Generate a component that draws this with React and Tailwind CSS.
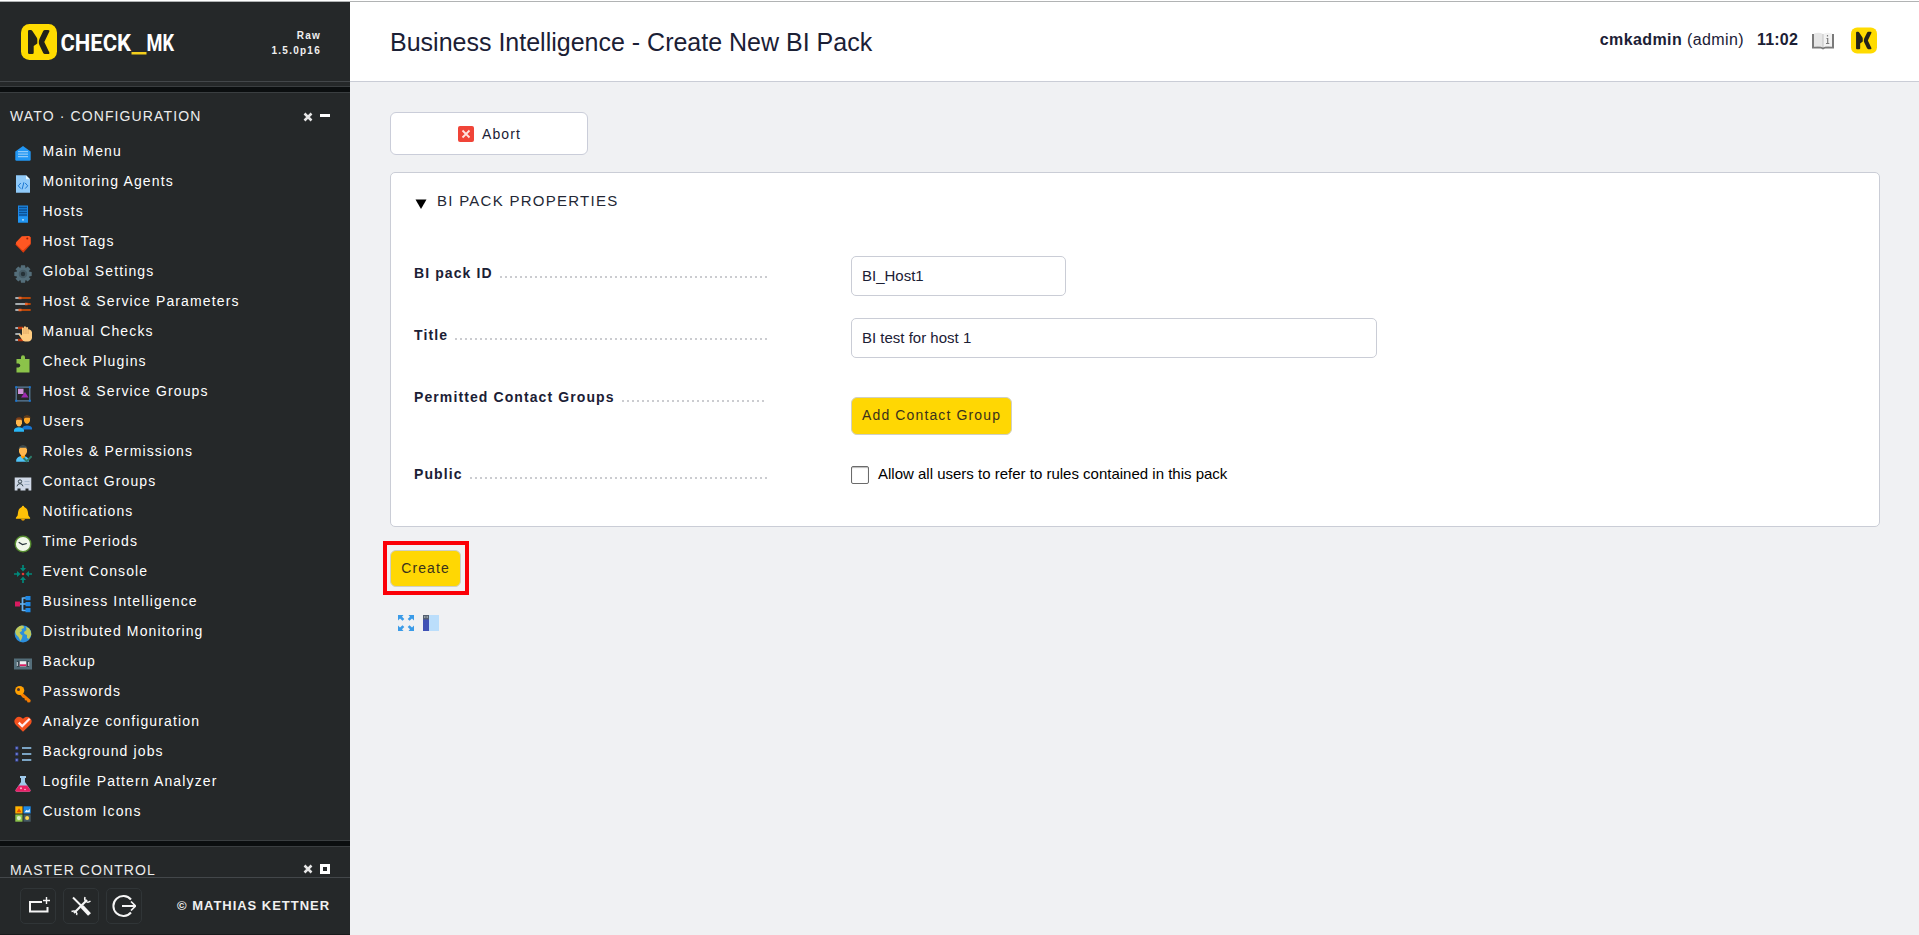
const icons = {
  main: (
    <>
      <path d="M1.3 6.5 9 1l7.700 5.500V14.500a1.200 1.200 0 0 1-1.200 1.200H2.500a1.200 1.200 0 0 1-1.200-1.200Z" fill="#2196f3" />
      <path d="M4 6.700h10M4 9.200h10M4 11.700h10" stroke="#90caf9" strokeWidth="1.200" />
    </>
  ),
  agents: (
    <>
      <path d="M2 .3h10l4 4v13.400H2Z" fill="#90caf9" />
      <path d="M12 .3l4 4h-4Z" fill="#e1f5fe" />
      <path d="M6.800 8 4.300 10.800 6.800 13.600M11.200 8l2.500 2.800-2.500 2.800M9.900 7.300 8.100 14.300" stroke="#1976d2" strokeWidth="1" fill="none" />
    </>
  ),
  hosts: (
    <>
      <path d="M4 .5h10v17H4Z" fill="#1e88e5" />
      <path d="M5 2.500h8M5 5h8M5 7.500h8M5 10h8" stroke="#0b4f92" strokeWidth="1.300" />
      <path d="M4 11.700h10v5.800H4Z" fill="#2196f3" />
      <circle cx="9" cy="14.800" r=".9" fill="#cfe8fb" />
    </>
  ),
  tags: (
    <>
      <path d="M1.300 9.500 9 3.500l7.700-1.500v7.500L9.300 17.700Z" fill="#d83a0e" />
      <path d="M2.500 6.800 7.800 1.300 14.800.9q1.500 0 1.700 1.700l.1 5.900L9.500 15Q8.500 15.500 7.800 14.700L2.100 9Q1.300 8 2.500 6.800Z" fill="#ff5722" />
      <circle cx="13.300" cy="3.600" r="1" fill="#8e240c" />
    </>
  ),
  gear: (
    <>
      <g fill="#546e7a">
        <circle cx="9" cy="9" r="6.700" />
        <path d="M7 .3h4l.5 3h-5ZM7 17.700h4l.5-3h-5ZM.3 11V7l3-.5v5ZM17.700 11V7l-3-.5v5Z" />
        <path d="M1.500 4.300 4.300 1.500l2.200 1.800-3 3ZM16.500 4.300 13.700 1.500l-2.200 1.800 3 3ZM1.500 13.700l2.800 2.800 2.200-1.800-3-3ZM16.500 13.700l-2.800 2.800-2.200-1.800 3-3Z" />
      </g>
      <circle cx="9" cy="9" r="4.300" fill="#455a64" />
      <circle cx="9" cy="9" r="2.200" fill="#263238" />
    </>
  ),
  params: (
    <>
      <path d="M1.300 3h4M1.300 9h10M1.300 15h4" stroke="#cfd8dc" strokeWidth="1.700" />
      <path d="M5.500 3h11.200M11.500 9h5.200M5.500 15h11.200" stroke="#e65100" strokeWidth="1.700" />
      <path d="M4.500 1.700h3v2.600h-3ZM11 7.700h2.600v2.600H11ZM4.500 13.700h3v2.600h-3Z" fill="#e8622a" />
    </>
  ),
  manual: (
    <>
      <path d="M1.300 3h5M1.300 9h5M1.300 15h4" stroke="#cfd8dc" strokeWidth="1.500" />
      <path d="M4 3h5M4 15h5" stroke="#bf360c" strokeWidth="2.600" />
      <path d="M4.500 9.500q1.200-1.200 2.800.3L8 10.500V3q.9-1 1.900 0V1.800q1-1 2.100 0V2.500q1.100-.9 2.100 0v2q1-.8 2 .2q2 1.300 2 3.300v4.500q-.6 3.900-4 4H11q-2-.2-3-2Z" fill="#ffcc80" />
      <path d="M9.900 3v6M12 2.500V9M14.100 4v5" stroke="#c98f4e" strokeWidth=".6" />
    </>
  ),
  plugins: (
    <path d="M2.500 4H7V2.200Q7 .2 9 .2t2 2V4h4.500v13.400H2.500V12.500H4.500Q6.300 12 6.300 10.500T4.500 8.500H2.500Z" fill="#8bc34a" />
  ),
  groups: (
    <>
      <path d="M2.200 2.200h13.600v13.600H2.200Z" stroke="#5b7f9e" strokeWidth="1.200" fill="none" />
      <path d="M4 3.700h5.500v5.300H4Z" fill="#ce93d8" />
      <path d="M7 12.500 11 7l3.500 5.500Z" fill="#9c27b0" />
      <path d="M1.200 1.200h2v2h-2ZM14.800 1.200h2v2h-2ZM1.200 14.800h2v2h-2ZM14.800 14.800h2v2h-2Z" fill="#1976d2" />
    </>
  ),
  users: (
    <>
      <path d="M8.500 14.500v-2.300q1-1.500 4.500-1.700 4.500.3 5 2.500v1.500Z" fill="#1976d2" />
      <path d="M10 3q0-2.300 3-2.300T16 3v3q-1 3-3 3t-3-3Z" fill="#ffa726" />
      <path d="M9.500 4q-.3-3.500 3.500-3.700T16.500 4l-1-1.200h-4Z" fill="#5d3a1a" />
      <path d="M0 16.700v-2q.8-2.200 4.800-2.400 4.200.2 5.200 2.400v2Z" fill="#29b6f6" />
      <path d="M2 5.500q.2-2.500 3-2.500t3 2.500v3Q7 11.500 5 11.500T2 8.500Z" fill="#ffb74d" />
      <path d="M1.700 6Q1.500 2.500 5 2.300T8.200 6l-1-1.300H3Z" fill="#7a3d18" />
    </>
  ),
  roles: (
    <>
      <path d="M2.200 16.700v-2Q3.300 11.300 8.500 11q5.200.3 6.300 3.700v2Z" fill="#4fc3f7" />
      <path d="M7 9h4v3l-2 2-2-2Z" fill="#ff9800" />
      <path d="M5 4Q5.500.7 9 .7T13 4v3q-1.500 4-4 4T5 7Z" fill="#ffb74d" />
      <path d="M4.700 4.700Q4.500.3 9 .2t4.300 4.500L12 2.800H6Z" fill="#37474f" />
      <path d="m9.500 13 3.200 3.200 5-5" stroke="#2e7d6b" strokeWidth="2" fill="none" />
    </>
  ),
  contact: (
    <>
      <path d="M.7 2.500h16.600v13H14.500v-2h-3v2h-5v-2h-3v2H.7Z" fill="#cfd8e6" />
      <circle cx="6" cy="6.500" r="1.700" fill="none" stroke="#37474f" />
      <path d="M3 11.300q.4-2.500 3-2.700 2.600.2 3 2.700" fill="none" stroke="#37474f" />
      <path d="M10.500 6.500h5M10.500 9.500h5" stroke="#a9b9cd" />
    </>
  ),
  bell: (
    <>
      <path d="M9 .8q1 0 1.200 1.200 3 1 3.600 4.500l.6 4 1.700 2.300v1H1.900v-1l1.700-2.300.6-4Q4.800 3 7.800 2 8 .8 9 .8Z" fill="#ffc107" />
      <path d="M7 14h4q-.4 1.700-2 1.700T7 14Z" fill="#e69a00" />
    </>
  ),
  clock: (
    <>
      <circle cx="9" cy="9" r="8.500" fill="#558b2f" />
      <circle cx="9" cy="9" r="7.100" fill="#f1f8e9" />
      <path d="m4.700 7.200 3.800 2.300 4.300-1" stroke="#263238" strokeWidth="1.200" fill="none" />
    </>
  ),
  event: (
    <>
      <g stroke="#00897b" strokeWidth="1.700">
        <path d="M9 0v3M9 15v3M0 9h3.500M14.500 9H18" />
      </g>
      <path d="M6 3h6L9 6.500ZM6 15h6L9 11.500ZM3 6v6L6.500 9ZM15 6v6L11.500 9Z" fill="#00897b" />
      <circle cx="9" cy="9" r="1.300" fill="#e53935" />
    </>
  ),
  bi: (
    <>
      <path d="M5 9h8M8.500 2.500V16M8.500 3h4M8.500 15.500h4" stroke="#64b5f6" strokeWidth="1.700" fill="none" />
      <path d="M1 6.500h5v5H1Z" fill="#d81b60" />
      <path d="M11.500 1h5v4.200h-5ZM11.500 7h5v4.200h-5ZM11.500 13h5v4.200h-5Z" fill="#1e88e5" />
    </>
  ),
  globe: (
    <>
      <circle cx="9" cy="9" r="8.400" fill="#2c8fdc" />
      <path d="M3 3Q6-.5 9.500.8L10 3 7.500 4 8 6 5.500 7.500 7 9.500l1.500 1L8 13l-1.500 3L4.500 12 2 9.500 1.200 7Q1.500 4.500 3 3ZM12 2l3 1.200Q17.500 6 17.200 10L15 14l-2-1V10l-2.500-1L10 7l2.500-2Z" fill="#c0ca5a" />
    </>
  ),
  backup: (
    <>
      <path d="M0 3.500h18v11H0Z" fill="#546e7a" />
      <path d="M3 5.700h12v6.300H3Z" fill="#37474f" />
      <path d="M5.700 6.200h6.600v5.300H5.700Z" fill="#eceff1" />
      <path d="M5.700 9.300h6.600v1.800H5.700Z" fill="#d81b60" />
      <path d="M3.300 7v4M14.700 7v4" stroke="#cfd8dc" />
    </>
  ),
  key: (
    <>
      <path d="m8 7.500 8.700 7.500-.4 2.200-2.600.2-1-2-1.800-.2-.4-2-1.700-.4L5.500 9Z" fill="#f57c00" />
      <circle cx="5.700" cy="5.500" r="4.600" fill="#ffa000" />
      <circle cx="4.500" cy="4.400" r="1.500" fill="#4e342e" />
    </>
  ),
  heart: (
    <>
      <path d="M9 16.700 2 10Q-.7 7 1 4.200 4.500-.2 9 3.700q4.500-3.900 8 .5 1.700 2.800-1 5.800Z" fill="#f4511e" />
      <path d="m4.700 7.600 3.500 3.500 7.500-7.300" stroke="#ffebee" strokeWidth="2.200" fill="none" />
    </>
  ),
  jobs: (
    <>
      <path d="M1.300 1.500h3v3h-3ZM1.300 7.500h3v3h-3ZM1.300 13.500h3v3h-3Z" fill="#3f51b5" />
      <path d="M2.300 2.500h1v1h-1ZM2.300 8.500h1v1h-1ZM2.300 14.500h1v1h-1Z" fill="#c5cae9" />
      <path d="M8 3h9.300M8 9h9.300M8 15h9.300" stroke="#7ba4c4" strokeWidth="2" />
    </>
  ),
  flask: (
    <>
      <path d="M6 1h6v2h-1v4l5.500 8q.4 1.700-1.500 1.700H3Q1.100 16.700 1.500 15L7 7V3H6Z" fill="#9fc9ea" />
      <path d="M4.800 10.500h8.400l3.300 4.800q.2 1.400-1.500 1.400H3q-1.700 0-1.500-1.400Z" fill="#e91e63" />
      <circle cx="7" cy="13.300" r="1" fill="#f8bbd0" />
      <circle cx="11" cy="14.500" r=".8" fill="#f8bbd0" />
    </>
  ),
  custom: (
    <>
      <path d="M1.300 1.300h7.200v7.200H1.300Z" fill="#ffb300" />
      <path d="M9.500 1.300h7.200v7.200H9.500Z" fill="#1e88e5" />
      <path d="M1.300 9.500h7.200v7.200H1.300Z" fill="#8bc34a" />
      <path d="M9.500 9.500h7.200v7.200H9.500Z" fill="#455a64" />
      <path d="m2.500 7.300 2.500-4 2.500 4Z" fill="#e65100" />
      <path d="m10.500 7.300 2-2.500 1.500 1 1.800-2v3.500Z" fill="#e3f2fd" />
      <circle cx="4.900" cy="13.100" r="2.100" fill="#dcedc8" />
      <circle cx="13.100" cy="13.100" r="2" fill="#ffd54f" />
    </>
  ),
};

const menu = [
  ["main", "Main Menu"],
  ["agents", "Monitoring Agents"],
  ["hosts", "Hosts"],
  ["tags", "Host Tags"],
  ["gear", "Global Settings"],
  ["params", "Host & Service Parameters"],
  ["manual", "Manual Checks"],
  ["plugins", "Check Plugins"],
  ["groups", "Host & Service Groups"],
  ["users", "Users"],
  ["roles", "Roles & Permissions"],
  ["contact", "Contact Groups"],
  ["bell", "Notifications"],
  ["clock", "Time Periods"],
  ["event", "Event Console"],
  ["bi", "Business Intelligence"],
  ["globe", "Distributed Monitoring"],
  ["backup", "Backup"],
  ["key", "Passwords"],
  ["heart", "Analyze configuration"],
  ["jobs", "Background jobs"],
  ["flask", "Logfile Pattern Analyzer"],
  ["custom", "Custom Icons"],
];

function Mark({ className }) {
  return (
    <svg viewBox="0 0 36 36" className={className}>
      <rect width="36" height="36" rx="8.500" fill="#ffdb00" />
      <path d="M7 7.300Q7 6 8.300 6h1.500q1 0 1.600.9l4.300 6.600q.6.900.6 1.900v4.100l-3.600 2.500v6.700q0 1.300-1.300 1.300H8.300Q7 30 7 28.700Z" fill="#23231a" />
      <path d="M24 6h3q2.200 0 1.100 2l-4.800 9.900 4.800 10.100q1.100 2-1.100 2h-3q-1.200 0-1.800-1.100l-3.800-8q-.6-1-.6-2.900t.6-3.100l3.800-7.800Q22.800 6 24 6Z" fill="#23231a" />
    </svg>
  );
}

function Divider() {
  return <div className="h-[7px] shrink-0 border-y border-[#3a3e40] bg-[#0b0e0f]" />;
}

function CloseIcon() {
  return (
    <svg viewBox="0 0 10 10" className="size-[10px]">
      <path d="M1.500 1.500l7 7M8.500 1.500l-7 7" stroke="#e6e6e6" strokeWidth="2.500" />
    </svg>
  );
}

function FooterButton({ children }) {
  return (
    <div className="flex size-[36px] items-center justify-center rounded-[5px] border border-[#303537]">
      <svg viewBox="0 0 24 24" className="size-[24px]" fill="none" stroke="#f5f5f5">
        {children}
      </svg>
    </div>
  );
}

function Row({ label, height, children }) {
  return (
    <div className={`flex items-start ${height}`}>
      <div className="flex h-[34px] w-[354px] items-center pl-px text-[14px] font-bold leading-[34px] tracking-[1.1px] text-[#1b2035]">
        <span className="whitespace-nowrap">{label}</span>
        <span className="ml-[7px] mt-[7px] h-[2px] flex-1 bg-[repeating-linear-gradient(90deg,#cbccd0_0_2px,transparent_2px_5px)]" />
      </div>
      <div className="ml-[84px]">{children}</div>
    </div>
  );
}

export default function App() {
  return (
    <div className="flex h-[935px] w-[1919px] flex-col overflow-hidden bg-[#f0f1f3] font-['Liberation_Sans',Arial,sans-serif]">
      <div className="h-[2px] shrink-0 border-b border-[#b1b3b4] bg-white" />
      <div className="flex min-h-0 flex-1">
        <aside className="flex w-[350px] shrink-0 flex-col bg-[#252829] text-white">
          <div className="flex h-[80px] shrink-0 items-start justify-between border-b border-[#43474a] pl-[21px] pr-[29px] pt-[22px]">
            <div className="flex">
              <Mark className="size-[36px]" />
              <svg viewBox="0 0 130 36" className="h-[36px] w-[130px] overflow-visible">
                <g fill="#fff" fontFamily="Roboto, sans-serif" fontWeight="700" fontSize="24.500">
                  <text x="3.500" y="26.800" textLength="70.500" lengthAdjust="spacingAndGlyphs">CHECK</text>
                  <text x="89.500" y="26.800" textLength="27.500" lengthAdjust="spacingAndGlyphs">MK</text>
                </g>
                <rect x="74.500" y="28" width="15" height="2.500" fill="#f4cf1c" />
              </svg>
            </div>
            <div className="mt-[4px] text-right text-[10px] font-bold leading-[15px] tracking-[1.250px] text-[#f0f0f0]">
              Raw
              <br />
              1.5.0p16
            </div>
          </div>
          <div className="h-[4px] shrink-0" />
          <Divider />
          <div className="flex h-[747px] shrink-0 flex-col">
            <div className="mt-[15px] flex h-[17px] shrink-0 items-center justify-between pl-[10px] pr-[20px] text-[14px] tracking-[1.120px] text-[#ececec]">
              <span>WATO · CONFIGURATION</span>
              <span className="flex items-center gap-[7px]">
                <CloseIcon />
                <span className="mb-[2px] h-[3px] w-[10px] bg-white" />
              </span>
            </div>
            <ul className="mt-[11px]">
              {menu.map(([icon, label]) => (
                <li key={icon} className="flex h-[30px] items-start pl-[14px]">
                  <svg viewBox="0 0 18 18" className="mt-[9px] size-[18px]">
                    {icons[icon]}
                  </svg>
                  <span className="ml-[10.500px] text-[14px] leading-[30px] tracking-[1.130px]">{label}</span>
                </li>
              ))}
            </ul>
          </div>
          <Divider />
          <div className="flex h-[30px] shrink-0 items-end justify-between pl-[10px] pr-[20px] text-[14px] leading-[14px] tracking-[1.080px] text-[#ececec]">
            <span>MASTER CONTROL</span>
            <span className="mb-[3px] flex items-center gap-[7px]">
              <CloseIcon />
              <span className="size-[10px] border-[3px] border-white" />
            </span>
          </div>
          <div className="flex flex-1 items-center border-b border-t border-b-[#191b1c] border-t-[#43474a] pl-[20px] pr-[20px]">
            <div className="flex gap-[7px]">
              <FooterButton>
                <path d="M16 8H4v9.500h17.500V13" strokeWidth="2" />
                <path d="M20.500 3v7M17 6.500h7" strokeWidth="1.400" />
              </FooterButton>
              <FooterButton>
                <path d="M4 3.500l10.500 10.500" strokeWidth="2" />
                <path d="M13 12.500l7.500 8" strokeWidth="4" />
                <path d="M5 19 18 6" strokeWidth="2.200" />
                <path d="M16 3q-1 3 1 4.500T21.500 7M2.500 17.500q3-1 4.500.5T7.500 21" strokeWidth="1.500" />
              </FooterButton>
              <FooterButton>
                <path d="M19 5.500A10 10 0 1 0 19 18.500" strokeWidth="2" />
                <path d="M10 12h13" strokeWidth="2" />
                <path d="m19 7.500 4.500 4.500-4.500 4.500" strokeWidth="1.700" />
              </FooterButton>
            </div>
            <span className="ml-auto whitespace-nowrap text-[13px] font-bold tracking-[.97px] text-[#f0f0f0]">© MATHIAS KETTNER</span>
          </div>
        </aside>
        <main className="flex min-w-0 flex-1 flex-col">
          <header className="flex h-[80px] shrink-0 items-start border-b border-[#cacdd6] bg-white pl-[40px] pr-[42px] text-[#1b2035]">
            <h1 className="mt-[22px] whitespace-nowrap text-[25px] leading-[36px]">Business Intelligence - Create New BI Pack</h1>
            <div className="ml-auto flex items-start text-[16px] leading-[36px]">
              <span className="mt-[20px] whitespace-pre tracking-[.4px]">
                <b>cmkadmin</b> (admin)
              </span>
              <b className="ml-[13px] mt-[20px] tracking-[.2px]">11:02</b>
              <svg viewBox="0 0 22 18" className="ml-[14px] mt-[30px] h-[18px] w-[22px]">
                <path d="M0 2h2v12.500h7l2 1 2-1h7V2h2v14.500H13l-2 1-2-1H0Z" fill="#7a7a7a" />
                <path d="M2 1.500Q7 0 11 2v13q-4-1.500-9-.5Z" fill="#e6e6e6" />
                <path d="M11 2q4-2 9-.5v13q-5-1-9 .5Z" fill="#f2f2f2" />
                <path d="M11 2v13" stroke="#c4c4c4" />
                <path d="M15.500 3v1.500M14.500 6.500h1.200v5M14 11.500h3.300" stroke="#7b7b7b" fill="none" strokeWidth="1.200" />
              </svg>
              <Mark className="ml-[17px] mt-[25px] h-[27px] w-[26px]" />
            </div>
          </header>
          <div className="flex flex-col items-start pl-[40px] pt-[30px]">
            <button className="flex h-[43px] w-[198px] items-center justify-center rounded-[6px] border border-[#cacdd9] bg-white pl-px text-[14px] tracking-[1.100px] text-[#1b2035]">
              <svg viewBox="0 0 16 16" className="mr-[8px] size-[16px]">
                <rect width="16" height="16" rx="2" fill="#f04438" />
                <path d="m4.500 4.500 7 7m0-7-7 7" stroke="#ffe3e0" strokeWidth="1.800" />
              </svg>
              <span className="pt-px">Abort</span>
            </button>
            <section className="mt-[17px] h-[355px] w-[1490px] rounded-[5px] border border-[#cacdd6] bg-white pl-[22px]">
              <div className="flex h-[83px] items-start">
                <svg viewBox="0 0 12 10" className="ml-[2px] mt-[26px] h-[10px] w-[12px]">
                  <path d="M.5.500h11L6 10Z" fill="#000" />
                </svg>
                <h2 className="ml-[10px] mt-[17px] text-[15px] leading-[22px] tracking-[1.270px] text-[#232735]">BI PACK PROPERTIES</h2>
              </div>
              <Row label="BI pack ID" height="h-[62px]">
                <input readOnly value="BI_Host1" className="block h-[40px] w-[215px] rounded-[5px] border border-[#cacdd6] bg-white px-[10px] pb-[2px] text-[15px] text-[#1b2035]" />
              </Row>
              <Row label="Title" height="h-[62px]">
                <input readOnly value="BI test for host 1" className="block h-[40px] w-[526px] rounded-[5px] border border-[#cacdd6] bg-white px-[10px] pb-[2px] text-[15px] text-[#1b2035]" />
              </Row>
              <Row label="Permitted Contact Groups" height="h-[77px]">
                <button className="mt-[17px] block h-[38px] w-[161px] whitespace-nowrap rounded-[6px] border border-[#cfcfc4] bg-[#ffd703] pb-[2px] pl-[10px] text-left text-[14px] tracking-[1.130px] text-[#3a321c]">Add Contact Group</button>
              </Row>
              <Row label="Public" height="h-[60px]">
                <label className="flex items-start">
                  <span className="mt-[9px] size-[18px] rounded-[2px] border border-[#6b6b6b] bg-white shadow-[inset_0_1px_1px_#bbb]" />
                  <span className="ml-[9px] whitespace-nowrap text-[15px] leading-[34px] text-black">Allow all users to refer to rules contained in this pack</span>
                </label>
              </Row>
            </section>
            <div className="-ml-[7px] mt-[14px] border-4 border-[#fb0007] p-[4px] pl-[3px] pt-[5px]">
              <button className="block h-[37px] w-[71px] rounded-[6px] border border-[#cfcfc4] bg-[#ffd703] text-[14px] tracking-[1.100px] text-[#3a321c]">Create</button>
            </div>
            <div className="ml-[8px] mt-[20px] flex gap-[9px]">
              <svg viewBox="0 0 16 16" className="size-[16px]">
                <path d="M0 0h5.500L4 1.700 6.300 4 4.500 5.700 2 3.500 0 5.500ZM16 0v5.500L14 3.500 11.500 5.700 9.700 4 12 1.700 10.500 0ZM0 16v-5.500l2 2L4.500 10.300l1.800 1.700L4 14.300 5.500 16ZM16 16h-5.500l1.500-1.700-2.300-2.300 1.800-1.700 2.500 2.200 2-2Z" fill="#3a9be8" />
              </svg>
              <svg viewBox="0 0 16 16" className="size-[16px]">
                <path d="M0 0h16v16H0Z" fill="#bbdefb" />
                <path d="M0 0h6v16H0Z" fill="#3f51b5" />
                <path d="M0 0h6v4.500H0Z" fill="#546070" />
                <path d="M1 1.500h1.500v1H1ZM3.500 1.500H5v1H3.500Z" fill="#cfd8dc" />
              </svg>
            </div>
          </div>
        </main>
      </div>
    </div>
  );
}
